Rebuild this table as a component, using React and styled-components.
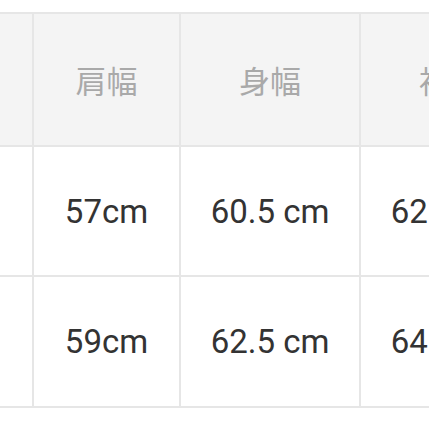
import styled, { createGlobalStyle } from "styled-components";

const GlobalStyle = createGlobalStyle`
  html, body {
    margin: 0;
    padding: 0;
    background: #ffffff;
    overflow: hidden;
  }
`;

const Page = styled.div`
  width: 429px;
  height: 429px;
  padding-top: 12px;
  box-sizing: border-box;
  overflow: hidden;
`;

const Grid = styled.div`
  display: grid;
  grid-template-columns: 200px 145px 178px 178px;
  grid-template-rows: 131px 128px 129px;
  gap: 2px;
  padding: 2px 0;
  margin-left: -168px;
  width: max-content;
  background: #e6e6e6;
`;

const Cell = styled.div`
  display: flex;
  align-items: center;
  justify-content: center;
  background: ${(p) => (p.$head ? "#f4f4f4" : "#ffffff")};
  color: ${(p) => (p.$head ? "#a9a9a9" : "#333333")};
  font-family: Roboto, "Noto Sans CJK JP", sans-serif;
  font-size: ${(p) => (p.$head ? "31px" : "33px")};
  font-weight: 400;
  white-space: nowrap;
`;

const head = ["サイズ", "肩幅", "身幅", "袖丈"];
const rows = [
  ["M", "57cm", "60.5 cm", "62.5 cm"],
  ["L", "59cm", "62.5 cm", "64.5 cm"],
];

function App() {
  return (
    <Page>
      <GlobalStyle />
      <Grid>
        {head.map((h) => (
          <Cell key={h} $head>
            {h}
          </Cell>
        ))}
        {rows.map((r) =>
          r.map((v, i) => <Cell key={r[0] + i}>{v}</Cell>)
        )}
      </Grid>
    </Page>
  );
}

export default App;
